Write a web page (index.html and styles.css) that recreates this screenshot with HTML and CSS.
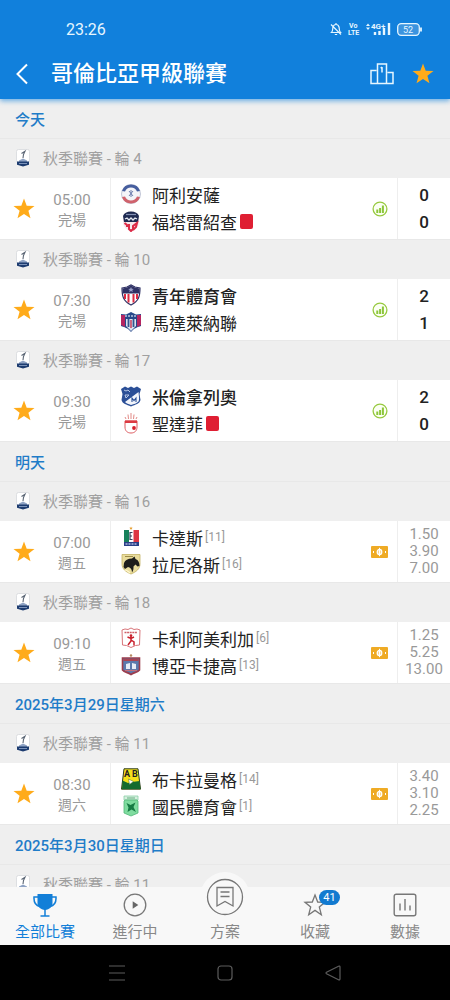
FILE: index.html
```html
<!DOCTYPE html>
<html lang="zh-Hant">
  <head>
    <meta charset="utf-8" />
    <meta name="viewport" content="width=device-width, initial-scale=1" />
    <title>哥倫比亞甲級聯賽</title>
    <link rel="stylesheet" href="styles.css" />
  </head>
  <body>
    <!-- shared icons -->
    <svg class="defs" aria-hidden="true">
      <symbol id="star" viewBox="0 0 22 22">
        <path d="M11 .5l2.700 7.200 7.800.3-6.100 4.700 2.100 7.500L11 15.900l-6.500 4.300 2.100-7.500L.5 8l7.800-.3z" fill="#ffab1a" />
      </symbol>
      <symbol id="league" viewBox="0 0 14 18">
        <rect x=".5" y=".5" width="13" height="13" rx="2" fill="#fff" stroke="#d5d8dc" stroke-width=".8" />
        <path d="M5.500 4.500L9 2.200 7.500 5.500 7 9" fill="none" stroke="#5b6675" stroke-width="1.100" />
        <path d="M3 11.500l4-2 4 2v1.500H3z" fill="#8fa3c4" />
        <path d="M1 12.500h12v3.200L7 17.500l-6-1.800z" fill="#1d3c70" />
        <path d="M3 14.500h8" stroke="#93a8cc" stroke-width=".8" />
      </symbol>
      <symbol id="stats" viewBox="0 0 16 16">
        <circle cx="8" cy="8" r="6.900" fill="#fbfff3" stroke="#97c93f" stroke-width="1.300" />
        <path d="M5.300 8.500V12M8.100 7v5M10.900 4.500V12" stroke="#8cc63a" stroke-width="2" />
      </symbol>
      <symbol id="cash" viewBox="0 0 17 12">
        <rect width="17" height="12" rx="1" fill="#efab25" />
        <ellipse cx="8.500" cy="6" rx="2.300" ry="2.700" fill="#f8d58d" stroke="#fff" stroke-width="1.200" />
        <path d="M8.500 1.800v8.400M2.500 5v2M14.500 5v2" stroke="#fff" stroke-width="1" />
      </symbol>
    </svg>

    <header class="header">
      <div class="status-bar">
        <span class="clock">23:26</span>
        <div class="status-icons">
          <svg width="12" height="14" viewBox="0 0 12 14" fill="none" stroke="#e6f6ff" stroke-width="1.200">
            <path d="M1.500 10.500C3 9 2.500 7 3 5c.4-1.600 1.600-2.500 3-2.500S8.600 3.400 9 5c.5 2 0 4 1.500 5.500zM6 1v1.500M4.800 12.500h2.400M1 2.500l10 10" />
          </svg>
          <svg class="volte" width="12" height="14" viewBox="0 0 12 14">
            <text x="1" y="6">Vo</text>
            <text x="0" y="13">LTE</text>
          </svg>
          <svg class="signal" width="25" height="14" viewBox="0 0 25 14">
            <path d="M0 4l2-2.500L4 4zM0 5.500h4L2 8z" fill="#e6f6ff" />
            <text x="5" y="7">4G+</text>
            <path d="M9 10v3M13.500 9v4M18 6v7M23 1v12" stroke="#e6f6ff" stroke-width="2.400" />
          </svg>
          <svg class="battery" width="25" height="13" viewBox="0 0 25 13">
            <rect x=".7" y=".7" width="21.600" height="11.600" rx="3.500" fill="#3c94df" stroke="#e6f6ff" stroke-width="1.300" />
            <path d="M24 4.500v4" stroke="#e6f6ff" stroke-width="1.800" />
            <text x="6" y="10">52</text>
          </svg>
        </div>
      </div>
      <div class="title-bar">
        <button class="icon-btn back" aria-label="返回">
          <svg width="12" height="22" viewBox="0 0 12 22" fill="none" stroke="#fff" stroke-width="2">
            <path d="M11 1.500L1.500 11l9.500 9.500" />
          </svg>
        </button>
        <h1>哥倫比亞甲級聯賽</h1>
        <button class="icon-btn" aria-label="積分榜">
          <svg width="24" height="22" viewBox="0 0 24 22" fill="none" stroke="#e6f6ff" stroke-width="1.500">
            <path d="M6.500 7.500H1v13h22v-11h-5.500M7.500 20.500V1h9v19.500M12 4v5.500M10.700 5.200L12 4" />
          </svg>
        </button>
        <button class="icon-btn" aria-label="收藏聯賽">
          <svg width="22" height="22"><use href="#star" /></svg>
        </button>
      </div>
    </header>

    <main class="fixtures">
      <h2 class="date">今天</h2>

      <h3 class="round"><svg><use href="#league" /></svg>秋季聯賽 - 輪 4</h3>
      <article class="match">
        <button class="fav" aria-label="收藏"><svg><use href="#star" /></svg></button>
        <div class="time"><time>05:00</time><span>完場</span></div>
        <div class="teams">
          <div class="team">
            <svg class="crest" viewBox="0 0 22 22">
              <circle cx="11" cy="11" r="9.500" fill="#f4f4f8" stroke="#9aa3bd" stroke-width=".6" />
              <path d="M2 8a9.500 9.500 0 0 1 18 0l-3 .5a6.500 6.500 0 0 0-12 0z" fill="#465e9e" />
              <path d="M2 14a9.500 9.500 0 0 0 18 0l-3-.5a6.500 6.500 0 0 1-12 0z" fill="#d0626c" />
              <path d="M9 8l4 5M13 8l-4 5M11 7v7" stroke="#6e7fae" stroke-width="1" />
            </svg>
            <span>阿利安薩</span>
          </div>
          <div class="team">
            <svg class="crest" viewBox="0 0 22 22">
              <path d="M3 6c1-3 4-4.500 8-4.500S18 3 19 6v6c0 5-4 8-8 9.500C7 20 3 17 3 12z" fill="#f6e8ec" />
              <path d="M3 6c1-3 4-4.500 8-4.500S18 3 19 6l-1 6H4z" fill="#1f2b52" />
              <path d="M6 4.500h10" stroke="#8390b3" stroke-width="1.200" />
              <path d="M5 9l2-1 2 2 2-2 2 2 2-2 2 1" stroke="#e4e7f0" stroke-width="1.300" fill="none" />
              <path d="M4.500 13l2.500 2v2M9 14v5l2 2 2-2v-3l4-3-1 4-3 3" stroke="#dc2b47" stroke-width="2" fill="none" />
            </svg>
            <span>福塔雷紹查</span><i class="red-card"></i>
          </div>
        </div>
        <svg class="extra stats"><use href="#stats" /></svg>
        <div class="score"><b>0</b><b>0</b></div>
      </article>

      <h3 class="round"><svg><use href="#league" /></svg>秋季聯賽 - 輪 10</h3>
      <article class="match">
        <button class="fav" aria-label="收藏"><svg><use href="#star" /></svg></button>
        <div class="time"><time>07:30</time><span>完場</span></div>
        <div class="teams">
          <div class="team winner">
            <svg class="crest" viewBox="0 0 22 22">
              <path d="M2 4l5-1 4-2 4 2 5 1c0 8-1 13-9 17C3 17 2 12 2 4z" fill="#fff" stroke="#2f3265" stroke-width="1.200" />
              <path d="M2.500 4.500L7 3.500l4-2 4 2 4.500 1v5h-17z" fill="#2f3265" />
              <path d="M11 3l.8 1.800 2 .1-1.500 1.200.5 2L11 7l-1.800 1.100.5-2-1.500-1.200 2-.1z" fill="#9ba1c8" />
              <path d="M5 10v5M8.500 10v8.500M13.500 10v8.500M17 10v5" stroke="#dd2c43" stroke-width="2" />
            </svg>
            <span>青年體育會</span>
          </div>
          <div class="team">
            <svg class="crest" viewBox="0 0 22 22">
              <path d="M1 3l5 .5L11 1l5 2.500L21 3v12c-3 1-7 2-10 6-3-4-7-5-10-6z" fill="#27488a" />
              <path d="M1 4h4v12l-4-2zM17 4h4v10l-4 2z" fill="#b52561" />
              <path d="M6 8h10v7l-5 5-5-5z" fill="#dbe3f0" />
              <path d="M8.500 8v8M13.500 8v8" stroke="#35558f" stroke-width="1.800" />
              <path d="M11 9v8" stroke="#c83e5c" stroke-width="1.500" />
              <path d="M5 5h12" stroke="#b7c2df" stroke-width="1.500" stroke-dasharray="2 1" />
            </svg>
            <span>馬達萊納聯</span>
          </div>
        </div>
        <svg class="extra stats"><use href="#stats" /></svg>
        <div class="score"><b>2</b><b>1</b></div>
      </article>

      <h3 class="round"><svg><use href="#league" /></svg>秋季聯賽 - 輪 17</h3>
      <article class="match">
        <button class="fav" aria-label="收藏"><svg><use href="#star" /></svg></button>
        <div class="time"><time>09:30</time><span>完場</span></div>
        <div class="teams">
          <div class="team winner">
            <svg class="crest" viewBox="0 0 22 22">
              <path d="M1 4l4-2.500L8 3l3-1.500L14 3l3-1.500L21 4l-1.500 5 1 6c-1 4-5 4.500-9.500 6.500C6.500 19.500 2.500 19 1.500 15l1-6z" fill="#2b4f97" />
              <path d="M18.500 7c.5 4 1 8 0 9.500-2 2-4.500 2.500-7.500 3.500-2.500-1-4.500-1.500-6-3z" fill="#f2f5fb" />
              <path d="M12 17v-4l2 2.500 2-2.500v4" fill="none" stroke="#2b4f97" stroke-width="1.100" />
              <path d="M4 5l2 1 2-1 2 2M5 10h4l-3 3z" fill="none" stroke="#b8c7e5" stroke-width="1" />
            </svg>
            <span>米倫拿列奧</span>
          </div>
          <div class="team">
            <svg class="crest" viewBox="0 0 22 22">
              <path d="M5 9h12v6c0 4-2.500 6-6 6s-6-2-6-6z" fill="#fff" stroke="#dd5a5f" stroke-width="1" />
              <path d="M5 8.500h12v2.500H5z" fill="#dc3a42" />
              <circle cx="14" cy="16" r="1.900" fill="#d71f2b" />
              <path d="M6 7l-1-2M8.500 7L8 2.500M11 7V1M13.500 7l.5-4.500M16 7l1-2" stroke="#e28a86" stroke-width="1" />
            </svg>
            <span>聖達菲</span><i class="red-card"></i>
          </div>
        </div>
        <svg class="extra stats"><use href="#stats" /></svg>
        <div class="score"><b>2</b><b>0</b></div>
      </article>

      <h2 class="date">明天</h2>

      <h3 class="round"><svg><use href="#league" /></svg>秋季聯賽 - 輪 16</h3>
      <article class="match">
        <button class="fav" aria-label="收藏"><svg><use href="#star" /></svg></button>
        <div class="time"><time>07:00</time><span>週五</span></div>
        <div class="teams">
          <div class="team">
            <svg class="crest" viewBox="0 0 22 22">
              <path d="M11 .5l.5 1.200h1.300l-1 .8.400 1.200-1.200-.7-1.200.7.400-1.200-1-.8h1.300z" fill="#e59c2c" />
              <path d="M4 4h5v12H4z" fill="#17805a" />
              <path d="M9 4h4.500v12H9z" fill="#fff" />
              <path d="M13.500 4H19v12h-5.500z" fill="#de3744" />
              <path d="M12.500 6.500h-2.500v7h2.500M10 10h2" fill="none" stroke="#33415c" stroke-width="1.200" />
              <path d="M4 16h15v4H4z" fill="#293f86" />
              <path d="M5.500 18h12" stroke="#aab6dd" stroke-width="1.400" stroke-dasharray="2 1" />
            </svg>
            <span>卡達斯</span><small>[11]</small>
          </div>
          <div class="team">
            <svg class="crest" viewBox="0 0 22 22">
              <path d="M2 1.500h18v9.500c0 5-4 8-9 10-5-2-9-5-9-10z" fill="#e9dc9c" stroke="#c4b364" stroke-width=".8" />
              <path d="M4 10c1-3 4-4.500 8-4.500l2.500-2 1 2.500c3 1 4 4 4 7l-2 .5-2-2-2 2c0 2.500 0 4-1.500 6 0-4-2-5-4-5.500L5 16l-1.500-2z" fill="#1d1d1b" />
              <path d="M5 17c2 0 3 1.500 5 3" stroke="#fff7cf" stroke-width="1.200" fill="none" />
              <path d="M5 3.500h8" stroke="#9c8c48" stroke-width="1" />
            </svg>
            <span>拉尼洛斯</span><small>[16]</small>
          </div>
        </div>
        <svg class="extra cash"><use href="#cash" /></svg>
        <div class="odds"><span>1.50</span><span>3.90</span><span>7.00</span></div>
      </article>

      <h3 class="round"><svg><use href="#league" /></svg>秋季聯賽 - 輪 18</h3>
      <article class="match">
        <button class="fav" aria-label="收藏"><svg><use href="#star" /></svg></button>
        <div class="time"><time>09:10</time><span>週五</span></div>
        <div class="teams">
          <div class="team">
            <svg class="crest" viewBox="0 0 22 22">
              <path d="M2 3l3-1 3 .5L11 1l3 1.500L17 2l3 1-.5 15-4 .5-4.500 2-4.500-2-4-.5z" fill="#fff" stroke="#d9767b" stroke-width="1" />
              <path d="M4.500 5.500h13" stroke="#cf6168" stroke-width="1.300" stroke-dasharray="2 .600" />
              <circle cx="11" cy="8.500" r="1.300" fill="#c9212d" />
              <path d="M11 9v5l-3 4M11 13l3 2v3.500M7.500 10l3.500 1.500 3-1.500" fill="none" stroke="#c9212d" stroke-width="1.500" />
            </svg>
            <span>卡利阿美利加</span><small>[6]</small>
          </div>
          <div class="team">
            <svg class="crest" viewBox="0 0 22 22">
              <circle cx="11" cy="1.500" r="1.200" fill="#b88a62" />
              <path d="M2.500 4h17v12c-2 2.500-5 2-8.500 4.500C7.500 18 4.500 18.500 2.500 16z" fill="#5a79ad" stroke="#9b3c4c" stroke-width="1.600" />
              <path d="M3.500 5h15v2h-15z" fill="#a94452" />
              <path d="M6 10l4-1v6H6zM12 9l4 1v5h-4z" fill="#e7edf7" />
              <path d="M5 16.500h12" stroke="#c4707b" stroke-width="1.200" />
            </svg>
            <span>博亞卡捷高</span><small>[13]</small>
          </div>
        </div>
        <svg class="extra cash"><use href="#cash" /></svg>
        <div class="odds"><span>1.25</span><span>5.25</span><span>13.00</span></div>
      </article>

      <h2 class="date">2025年3月29日星期六</h2>

      <h3 class="round"><svg><use href="#league" /></svg>秋季聯賽 - 輪 11</h3>
      <article class="match">
        <button class="fav" aria-label="收藏"><svg><use href="#star" /></svg></button>
        <div class="time"><time>08:30</time><span>週六</span></div>
        <div class="teams">
          <div class="team">
            <svg class="crest" viewBox="0 0 22 22">
              <path d="M4 .8h14l2.500 20.400h-19z" fill="#f5e11b" stroke="#2a3a1c" stroke-width="1" />
              <path d="M2.500 12.500L8 15l4-1 7.500-1 1 8h-18.500z" fill="#146b2e" />
              <path d="M8.500 11l5 2.500-4 3z" fill="#fff" stroke="#49703a" stroke-width=".5" />
              <text x="4" y="9">A</text>
              <text x="12" y="9">B</text>
            </svg>
            <span>布卡拉曼格</span><small>[14]</small>
          </div>
          <div class="team">
            <svg class="crest" viewBox="0 0 22 22">
              <path d="M4 1h14v4H4z" fill="#d6efdf" stroke="#8ccfa6" stroke-width=".8" />
              <path d="M5 5h12l1 1v12l-7 3-7-3V6z" fill="#7fdc9f" stroke="#53b679" stroke-width=".8" />
              <path d="M6.500 8l4 2 5-2.500-2 4.500 2.500 5-4.500-2.500L7.500 17l1-4.500z" fill="#167b43" />
              <path d="M7 3h8" stroke="#67ae80" stroke-width="1" />
            </svg>
            <span>國民體育會</span><small>[1]</small>
          </div>
        </div>
        <svg class="extra cash"><use href="#cash" /></svg>
        <div class="odds"><span>3.40</span><span>3.10</span><span>2.25</span></div>
      </article>

      <h2 class="date">2025年3月30日星期日</h2>

      <h3 class="round"><svg><use href="#league" /></svg>秋季聯賽 - 輪 11</h3>
    </main>

    <nav class="tabs">
      <a href="#" class="tab active">
        <svg width="24" height="24" viewBox="0 0 24 24" fill="none" stroke="#127fd8" stroke-width="1.500">
          <path d="M4.500 1h15v9c0 4-3 6.500-7.500 7-4.500-.5-7.500-3-7.500-7z" fill="#127fd8" stroke="none" />
          <path d="M5 4H1c-.3 5 1 8.500 6 9.500M19 4h4c.3 5-1 8.500-6 9.500M12 16v7M7.500 23h9" />
        </svg>
        <span>全部比賽</span>
      </a>
      <a href="#" class="tab">
        <svg width="24" height="24" viewBox="0 0 24 24">
          <circle cx="12" cy="12" r="10.800" fill="none" stroke="#777" stroke-width="1.300" />
          <path d="M9.700 8.200l5.600 3.800-5.600 3.800z" fill="#666" />
        </svg>
        <span>進行中</span>
      </a>
      <a href="#" class="tab plan">
        <svg class="plan-icon" width="38" height="38" viewBox="0 0 38 38" fill="none" stroke="#777" stroke-width="1.300">
          <circle cx="19" cy="19" r="17.500" />
          <path d="M11 9.500h16V28l-8-4.500-8 4.500zM14.500 14h9M14.500 18.500h9" />
        </svg>
        <span>方案</span>
      </a>
      <a href="#" class="tab">
        <svg width="24" height="24" viewBox="0 0 24 24" fill="none" stroke="#777" stroke-width="1.300">
          <path d="M12 2l2.700 7 7.300.3-5.700 4.700 2 7.700-6.300-4.300-6.300 4.300 2-7.700L2 9.300 9.300 9z" />
        </svg>
        <span>收藏</span>
        <em class="badge">41</em>
      </a>
      <a href="#" class="tab">
        <svg width="24" height="24" viewBox="0 0 24 24" fill="none" stroke="#777" stroke-width="1.400">
          <rect x="1.200" y="1.200" width="21.600" height="21.600" rx="2" />
          <path d="M7 10.500v7M12 6v11.500M17 12.500v5" />
        </svg>
        <span>數據</span>
      </a>
    </nav>

    <footer class="system-bar">
      <button class="icon-btn" aria-label="選單">
        <svg width="18" height="18" viewBox="0 0 18 18" fill="none" stroke="#5c5c5c" stroke-width="1.200">
          <path d="M1 2h16M1 9h16M1 16h16" />
        </svg>
      </button>
      <button class="icon-btn" aria-label="主畫面">
        <svg width="18" height="18" viewBox="0 0 18 18" fill="none" stroke="#5c5c5c" stroke-width="1.200">
          <rect x="2" y="2" width="14" height="14" rx="3" />
        </svg>
      </button>
      <button class="icon-btn" aria-label="返回上一頁">
        <svg width="18" height="18" viewBox="0 0 18 18" fill="none" stroke="#5c5c5c" stroke-width="1.200">
          <path d="M14.500 2.200c.8-.4 1.500 0 1.500.8v12c0 .8-.7 1.200-1.500.8L2.500 9.700c-.6-.4-.6-1 0-1.400z" />
        </svg>
      </button>
    </footer>
  </body>
</html>
```

FILE: styles.css
```css
* {
  box-sizing: border-box;
}

body {
  margin: 0;
  height: 100vh;
  display: flex;
  flex-direction: column;
  overflow: hidden;
  background: #efefef;
  color: #222;
  font-family: Roboto, "Noto Sans CJK TC", sans-serif;
}

h1,
h2,
h3 {
  margin: 0;
  font-weight: 400;
}

svg {
  display: block;
  flex-shrink: 0;
}

.defs {
  position: absolute;
  width: 0;
  height: 0;
}

.icon-btn,
.fav {
  display: flex;
  align-items: center;
  justify-content: center;
  padding: 0;
  border: none;
  background: none;
  cursor: pointer;
}

/* header */
.header {
  position: relative;
  z-index: 1;
  flex-shrink: 0;
  background: #1180dc;
  color: #fff;
  box-shadow: 0 2px 5px rgba(17, 128, 220, 0.6);
}

.status-bar {
  display: flex;
  align-items: center;
  justify-content: space-between;
  height: 48px;
  padding: 10px 28px 0 66px;
}

.clock {
  font-size: 16px;
  color: #e6f6ff;
}

.status-icons {
  display: flex;
  align-items: center;
  gap: 6px;
}

.status-icons text {
  fill: #e6f6ff;
  font-size: 8px;
  font-weight: 700;
}

.status-icons .volte text {
  font-size: 7px;
}

.status-icons .battery text {
  font-size: 9px;
  font-weight: 400;
}

.title-bar {
  display: flex;
  align-items: center;
  height: 51px;
  padding: 0 16px;
  gap: 18px;
}

.title-bar h1 {
  flex: 1;
  font-size: 22px;
  font-weight: 500;
  line-height: 30px;
}

.back {
  width: 17px;
  justify-content: flex-start;
}

/* fixtures */
.fixtures {
  flex: 1;
  min-height: 0;
  overflow: hidden;
}

.date {
  height: 40px;
  padding: 0 15px;
  border-bottom: 1px solid #e8e8e8;
  color: #1f7cc8;
  font-size: 15px;
  font-weight: 500;
  line-height: 43px;
}

.round {
  display: flex;
  align-items: center;
  gap: 13px;
  height: 39px;
  padding: 0 16px 2px;
  color: #a0a0a0;
  font-size: 15px;
}

.round svg {
  width: 14px;
  height: 18px;
}

.match {
  display: flex;
  align-items: stretch;
  height: 62px;
  background: #fff;
  border-bottom: 1px solid #e8e8e8;
}

.fav {
  width: 48px;
}

.fav svg {
  width: 22px;
  height: 22px;
}

.time {
  display: flex;
  flex-direction: column;
  justify-content: center;
  align-items: center;
  width: 48px;
  margin-right: 14px;
  padding-top: 2px;
  color: #999;
  font-size: 14px;
  line-height: 20px;
}

.time time {
  font-size: 15px;
}

.teams {
  flex: 1;
  display: flex;
  flex-direction: column;
  justify-content: center;
  padding: 0 0 2px 9px;
  border-left: 1px solid #eee;
}

.team {
  display: flex;
  align-items: center;
  height: 27px;
  font-size: 17px;
  white-space: nowrap;
}

.winner {
  font-weight: 500;
}

.crest {
  width: 22px;
  height: 22px;
  margin-right: 10px;
}

.crest text {
  font-size: 9px;
  font-weight: 700;
  fill: #222;
}

.team small {
  margin-left: 2px;
  color: #999;
  font-size: 12px;
}

.red-card {
  width: 13px;
  height: 15px;
  margin-left: 3px;
  border-radius: 2px;
  background: #df1f33;
}

.extra {
  align-self: center;
  margin: 0 9px;
}

.stats {
  width: 16px;
  height: 16px;
}

.cash {
  width: 17px;
  height: 12px;
}

.score,
.odds {
  display: flex;
  flex-direction: column;
  align-items: center;
  justify-content: center;
  width: 53px;
  border-left: 1px solid #eee;
}

.score {
  font-size: 17px;
  line-height: 27px;
}

.score b {
  font-weight: 500;
}

.odds {
  color: #999;
  font-size: 15px;
  line-height: 17px;
}

/* bottom tabs */
.tabs {
  position: relative;
  display: flex;
  flex-shrink: 0;
  height: 58px;
  background: #f8f8f8;
}

.tab {
  position: relative;
  flex: 1;
  display: flex;
  flex-direction: column;
  align-items: center;
  justify-content: space-between;
  padding: 6px 0 3px;
  color: #888;
  font-size: 15px;
  line-height: 20px;
  text-decoration: none;
}

.tab.active {
  color: #127fd8;
}

.plan {
  justify-content: flex-end;
}

/* round bump rising above the tab bar */
.plan-icon {
  position: absolute;
  top: -15px;
  left: 50%;
  width: 50px;
  height: 50px;
  margin-left: -25px;
  padding: 6px;
  border-radius: 50%;
  background: #f8f8f8;
}

.badge {
  position: absolute;
  top: 3px;
  left: 50%;
  margin-left: 4px;
  width: 21px;
  border-radius: 8px;
  background: #127ad0;
  color: #fff;
  font-size: 11px;
  font-style: normal;
  line-height: 15px;
  text-align: center;
}

/* android buttons */
.system-bar {
  display: flex;
  flex-shrink: 0;
  align-items: center;
  justify-content: center;
  gap: 90px;
  height: 55px;
  background: #000;
}
```
